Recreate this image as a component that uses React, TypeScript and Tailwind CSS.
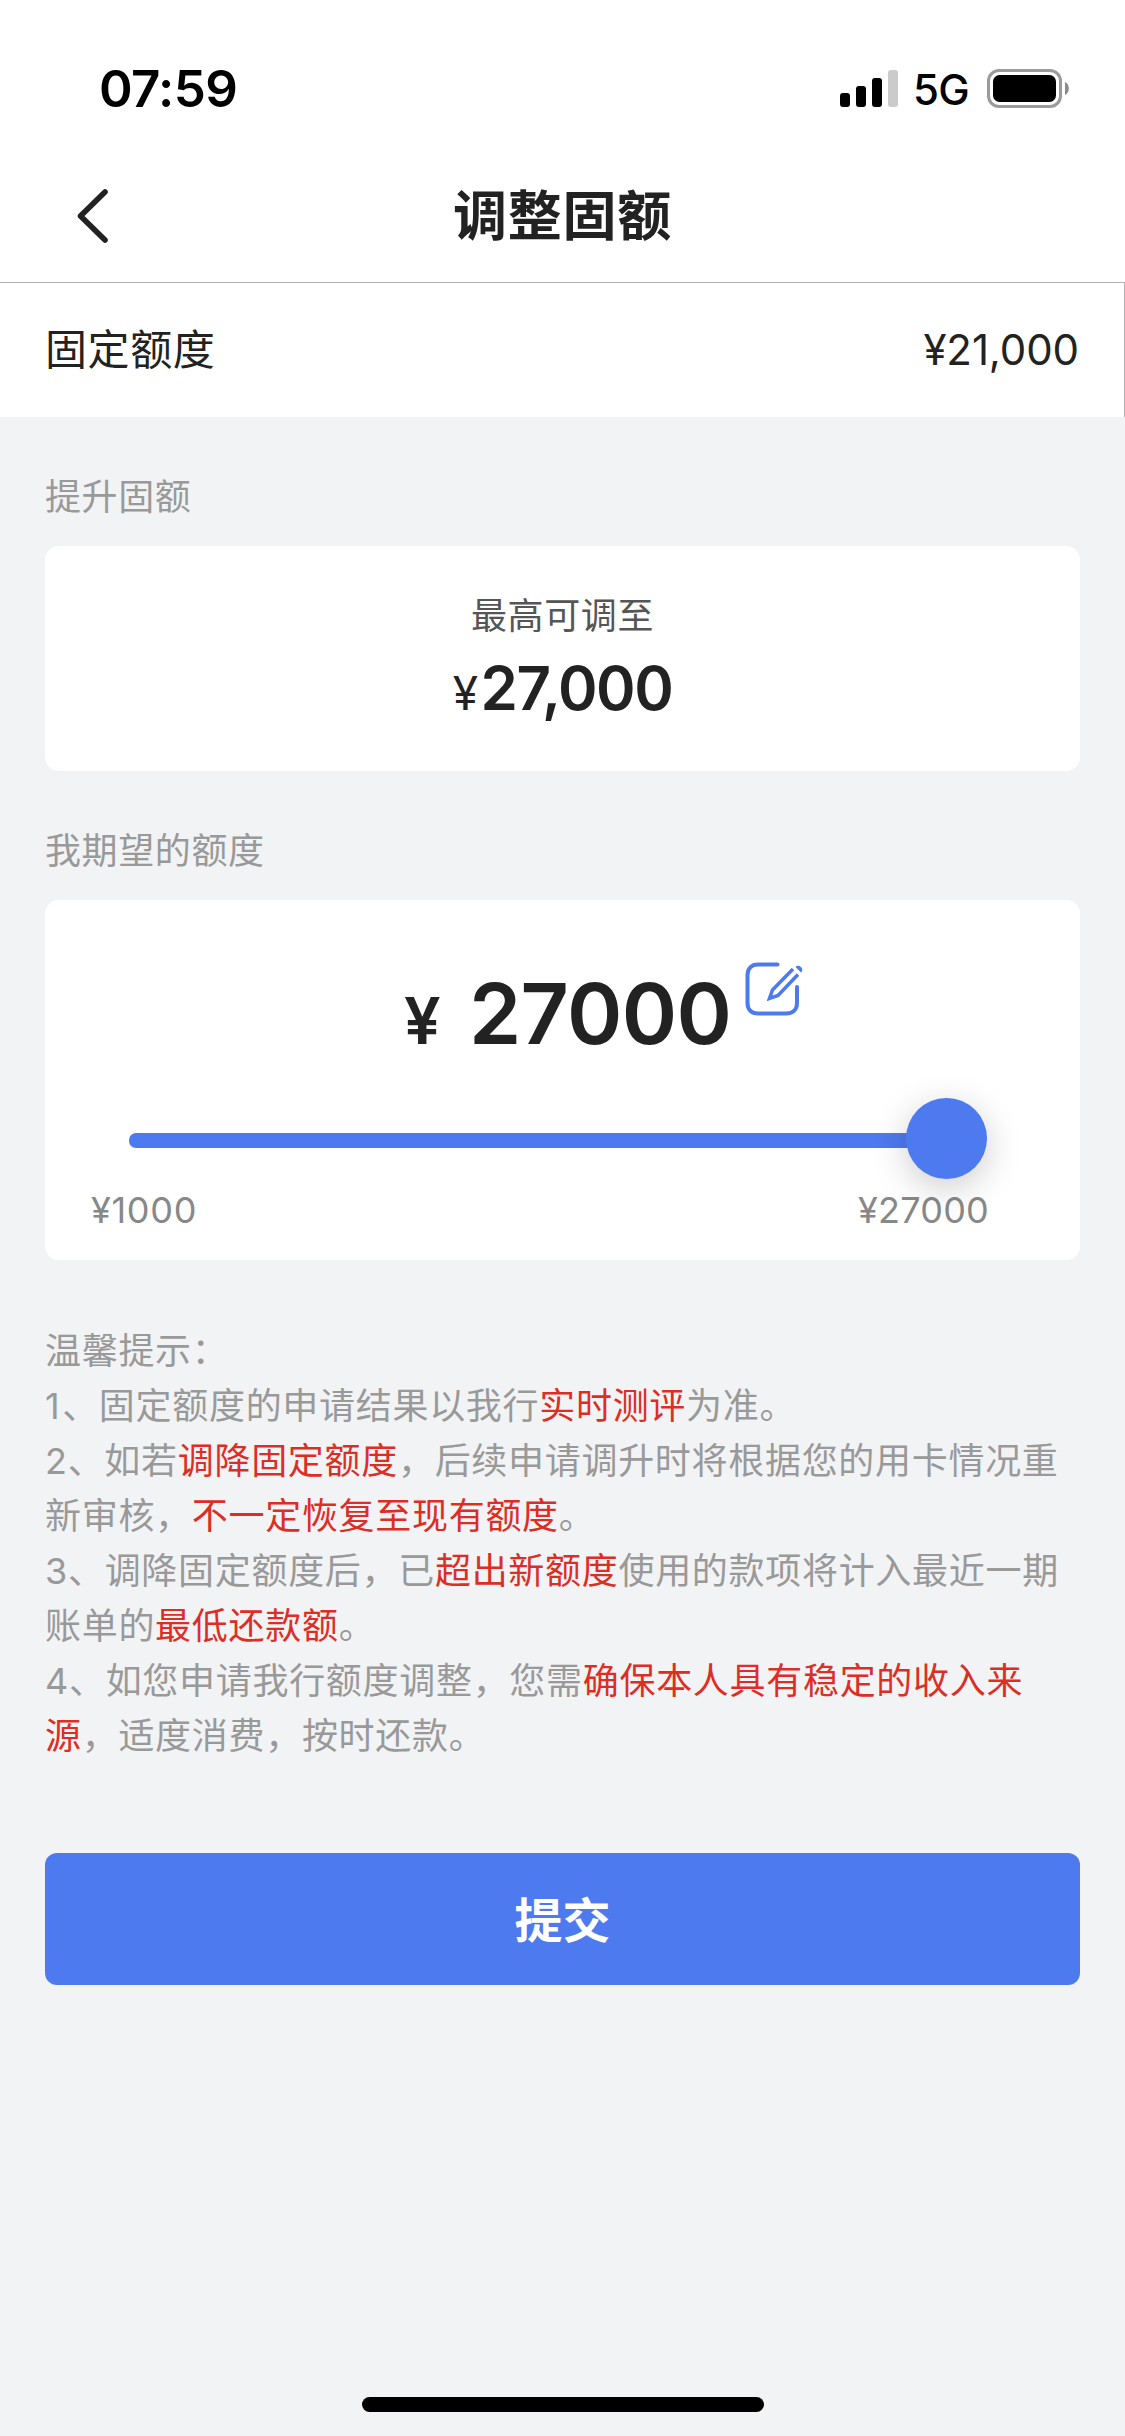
import React from 'react';

function StatusBar() {
  return <div className="h-[132px] pt-[59px] pl-[99px] pr-[56px] flex justify-between items-start text-black">
      <span className="text-[51px] leading-[60px] font-semibold tracking-[-0.6px]">07:59</span>
      <div className="flex items-start">
        <svg className="mt-[11px] w-[58px] h-[37px]" viewBox="0 0 58 37">
          <rect x="0" y="23" width="10" height="14" rx="3" />
          <rect x="16" y="16" width="10" height="21" rx="3" />
          <rect x="32" y="8" width="10" height="29" rx="3" />
          <rect x="48" y="0" width="10" height="37" rx="3" fill="#cbcbcb" />
        </svg>
        <span className="ml-[15px] w-[74px] text-[42px] leading-[62px] font-medium tracking-[-0.6px]">5G</span>
        <svg className="mt-[10px] w-[82px] h-[39px]" viewBox="0 0 82 39">
          <rect x="1.5" y="1.5" width="72" height="36" rx="10.5" fill="none" stroke="#9b9b9b" strokeWidth="3" />
          <rect x="6" y="6" width="63" height="27" rx="6.5" />
          <path d="M78 13c2.400 1 3.800 3.600 3.800 6.500s-1.400 5.500-3.800 6.500z" fill="#8a8a8a" />
        </svg>
      </div>
    </div>;
}

function Header() {
  return <header className="h-[151px] flex items-center border-b border-[#b0b0b0] px-[77px] pt-[18px]">
      <svg className="w-[32px] h-[54px]" viewBox="0 0 32 54" fill="none" stroke="#222" strokeWidth="5.600" strokeLinecap="round" strokeLinejoin="round">
        <path d="M28 3 3.500 27 28 51" />
      </svg>
      <h1 className="flex-1 pt-[2px] pr-[32px] text-center text-[54px] leading-[60px] font-bold tracking-[0.8px]">调整固额</h1>
    </header>;
}

function EditIcon() {
  return <svg className="ml-[10px] mt-[11px] w-[60px] h-[58px]" viewBox="0 0 60 58" fill="none" stroke="#4e7aef" strokeWidth="4" strokeLinecap="round">
      <path d="M33.500 4.500H14C7.500 4.500 3.500 8.500 3.500 15v28c0 7 4 10.500 10.500 10.500h28.500c6.500 0 10.500-4 10.500-10.500V27" />
      <path d="M49 9 28.500 30l-3 8.500 8.500-3L54 14.500" strokeWidth="3.500" strokeLinecap="butt" strokeLinejoin="miter" />
      <path d="M51.500 7c1.500-2 4-1.500 5.500 0s2 3.500 0 5.500z" fill="#4e7aef" stroke="none" />
    </svg>;
}

function Red({ children }: { children: React.ReactNode }) {
  return <span className="text-[#dd2e26]">{children}</span>;
}

export default function App() {
  return <div className="w-[1125px] h-[2436px] flex flex-col bg-[#f2f3f5] text-[#222] font-[Inter,'Noto_Sans_CJK_SC',sans-serif]">
      <div className="bg-white">
        <StatusBar />
        <Header />
        <div className="h-[134px] px-[45px] flex items-center justify-between border-r border-[#b0b0b0] text-[42px] leading-[60px]">
          <span className="tracking-[0.6px]">固定额度</span>
          <span className="tracking-[-0.1px]">¥21,000</span>
        </div>
      </div>

      <main className="flex-1 px-[45px] flex flex-col">
        <h2 className="mt-[53px] text-[36px] leading-[54px] tracking-[0.6px] text-[#999]">提升固额</h2>
        <section className="mt-[22px] h-[225px] pt-[43px] rounded-[14px] bg-white text-center">
          <p className="text-[36px] leading-[54px] tracking-[0.6px] text-[#555]">最高可调至</p>
          <p className="mt-[9px] text-[60px] leading-[72px] font-semibold tracking-[-1.5px]">
            <span className="text-[46px] mr-[4px] font-normal">¥</span>27,000
          </p>
        </section>

        <h2 className="mt-[53px] text-[36px] leading-[54px] tracking-[0.6px] text-[#999]">我期望的额度</h2>
        <section className="mt-[22px] h-[360px] pt-[49px] rounded-[14px] bg-white">
          <div className="pl-[359px] flex items-start">
            <p className="w-[330px] text-[84px] leading-[130px] font-semibold tracking-[-0.7px] whitespace-nowrap">
              <span className="text-[65px] mr-[29px]">¥</span>27000
            </p>
            <EditIcon />
          </div>
          <div className="mt-[12px] ml-[84px] w-[858px] h-[81px] flex items-center">
            <div className="flex-1 h-[15px] mt-[3px] -mr-[10px] rounded-l-[7px] bg-[#4e7aef]" />
            <div className="relative w-[81px] h-[81px] rounded-full bg-[#4e7aef] shadow-[0_9px_36px_rgba(0,0,0,0.2)]" />
          </div>
          <div className="mt-[4px] pl-[46px] pr-[91px] flex justify-between text-[36px] leading-[54px] text-[#888]">
            <span className="tracking-[0.7px]">¥1000</span>
            <span className="tracking-[0.2px]">¥27000</span>
          </div>
        </section>

        <div className="mt-[64px] text-[36px] leading-[55px] tracking-[0.7px] text-[#999]">
          <p>温馨提示：</p>
          <p><span className="tracking-[2.500px]">1</span>、固定额度的申请结果以我行<Red>实时测评</Red>为准。</p>
          <p>2、如若<Red>调降固定额度</Red>，后续申请调升时将根据您的用卡情况重新审核，<Red>不一定恢复至现有额度</Red>。</p>
          <p>3、调降固定额度后，已<Red>超出新额度</Red>使用的款项将计入最近一期账单的<Red>最低还款额</Red>。</p>
          <p>4、如您申请我行额度调整，您需<Red>确保本人具有稳定的收入来源</Red>，适度消费，按时还款。</p>
        </div>

        <button className="mt-[89px] h-[132px] pt-[3px] rounded-[12px] bg-[#4e7aef] text-white text-[48px] leading-[60px] font-bold">提交</button>
      </main>

      <div className="mb-[24px] w-[402px] h-[15px] self-center rounded-full bg-black" />
    </div>;
}
